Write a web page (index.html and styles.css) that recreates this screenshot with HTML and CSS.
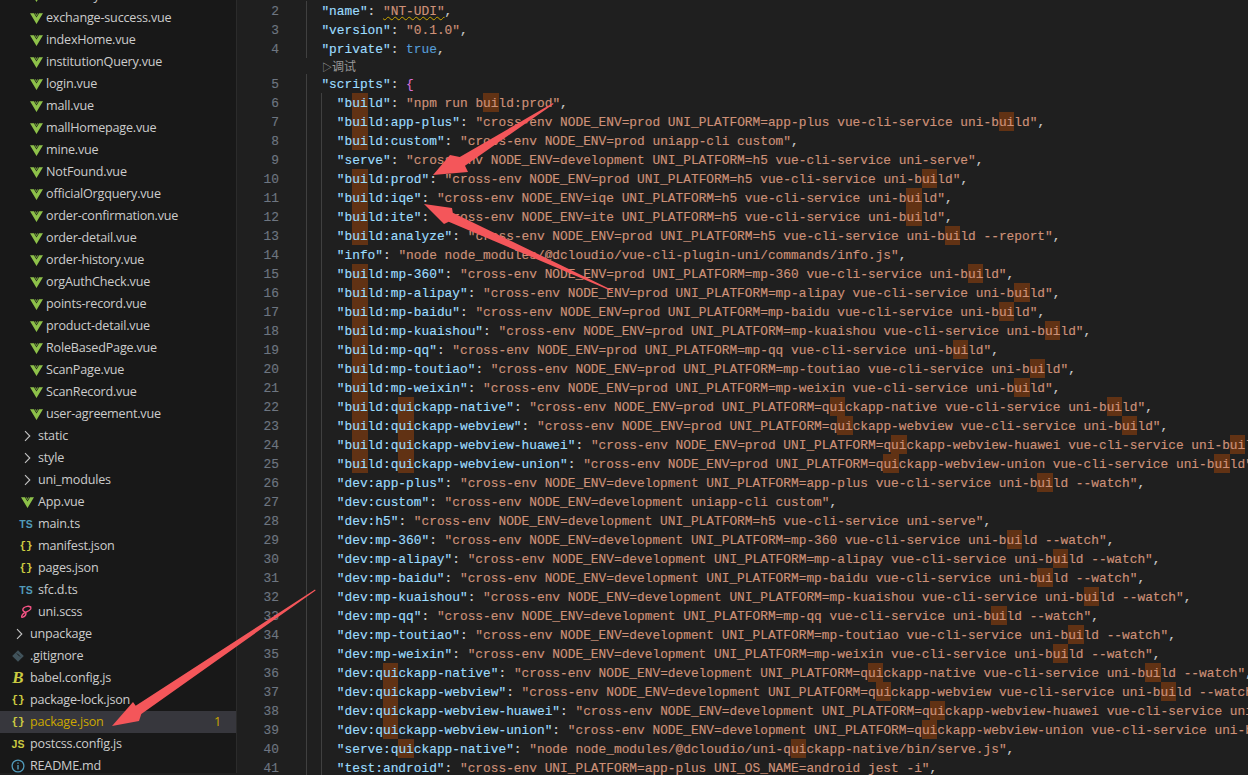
FILE: index.html
```html
<!DOCTYPE html>
<html lang="en">
<head>
<meta charset="utf-8">
<title>package.json</title>
<link rel="stylesheet" href="styles.css">
</head>
<body>
<svg width="0" height="0" class="defs">
<symbol id="vue" viewBox="0 0 13 11"><path d="M0 .2h3.9l2.6 4.3L9.1.2H13L6.5 11z" fill="#8dc149"/><path d="M4.6.2h1.1l.8 1.5.8-1.5h1.1L6.5 3.5z" fill="#8dc149" opacity=".75"/></symbol>
<symbol id="chev" viewBox="0 0 16 16"><path d="M7 3.2 11.8 8 7 12.8" fill="none" stroke="#c5c5c5" stroke-width="1.1"/></symbol>
</svg>
<div class="window">
<nav class="sidebar">
<ul class="tree">
<li class="row d3"><svg class="ico vue"><use href="#vue"/></svg><span class="name">discovery.vue</span></li>
<li class="row d3"><svg class="ico vue"><use href="#vue"/></svg><span class="name">exchange-success.vue</span></li>
<li class="row d3"><svg class="ico vue"><use href="#vue"/></svg><span class="name">indexHome.vue</span></li>
<li class="row d3"><svg class="ico vue"><use href="#vue"/></svg><span class="name">institutionQuery.vue</span></li>
<li class="row d3"><svg class="ico vue"><use href="#vue"/></svg><span class="name">login.vue</span></li>
<li class="row d3"><svg class="ico vue"><use href="#vue"/></svg><span class="name">mall.vue</span></li>
<li class="row d3"><svg class="ico vue"><use href="#vue"/></svg><span class="name">mallHomepage.vue</span></li>
<li class="row d3"><svg class="ico vue"><use href="#vue"/></svg><span class="name">mine.vue</span></li>
<li class="row d3"><svg class="ico vue"><use href="#vue"/></svg><span class="name">NotFound.vue</span></li>
<li class="row d3"><svg class="ico vue"><use href="#vue"/></svg><span class="name">officialOrgquery.vue</span></li>
<li class="row d3"><svg class="ico vue"><use href="#vue"/></svg><span class="name">order-confirmation.vue</span></li>
<li class="row d3"><svg class="ico vue"><use href="#vue"/></svg><span class="name">order-detail.vue</span></li>
<li class="row d3"><svg class="ico vue"><use href="#vue"/></svg><span class="name">order-history.vue</span></li>
<li class="row d3"><svg class="ico vue"><use href="#vue"/></svg><span class="name">orgAuthCheck.vue</span></li>
<li class="row d3"><svg class="ico vue"><use href="#vue"/></svg><span class="name">points-record.vue</span></li>
<li class="row d3"><svg class="ico vue"><use href="#vue"/></svg><span class="name">product-detail.vue</span></li>
<li class="row d3"><svg class="ico vue"><use href="#vue"/></svg><span class="name">RoleBasedPage.vue</span></li>
<li class="row d3"><svg class="ico vue"><use href="#vue"/></svg><span class="name">ScanPage.vue</span></li>
<li class="row d3"><svg class="ico vue"><use href="#vue"/></svg><span class="name">ScanRecord.vue</span></li>
<li class="row d3"><svg class="ico vue"><use href="#vue"/></svg><span class="name">user-agreement.vue</span></li>
<li class="row d2"><svg class="ico chev"><use href="#chev"/></svg><span class="name">static</span></li>
<li class="row d2"><svg class="ico chev"><use href="#chev"/></svg><span class="name">style</span></li>
<li class="row d2"><svg class="ico chev"><use href="#chev"/></svg><span class="name">uni_modules</span></li>
<li class="row d2"><svg class="ico vue"><use href="#vue"/></svg><span class="name">App.vue</span></li>
<li class="row d2"><span class="ico ts">TS</span><span class="name">main.ts</span></li>
<li class="row d2"><span class="ico js">{}</span><span class="name">manifest.json</span></li>
<li class="row d2"><span class="ico js">{}</span><span class="name">pages.json</span></li>
<li class="row d2"><span class="ico ts">TS</span><span class="name">sfc.d.ts</span></li>
<li class="row d2"><svg class="ico scss" viewBox="0 0 16 16"><path d="M12.5 3.2C11 1.6 7.4 2.3 5.6 4.1 4.4 5.3 4.6 6.6 6 7.4c1.3.7 2.2 1 2 2.2-.2 1.4-2 3.2-3.2 3.6-1.2.4-1.4-.6-.8-1.8.6-1.3 2-2.5 3.7-3.2 2-.9 4.2-1.6 5-3.2.3-.7.2-1.4-.2-2.8z" fill="none" stroke="#f55385" stroke-width="1.4"/></svg><span class="name">uni.scss</span></li>
<li class="row d1"><svg class="ico chev"><use href="#chev"/></svg><span class="name">unpackage</span></li>
<li class="row d1"><svg class="ico git" viewBox="0 0 16 16"><path d="M8 2.2 13.8 8 8 13.8 2.2 8z" fill="#41535b"/><path d="M7 5.5 10 8.5" stroke="#181818" stroke-width="1"/></svg><span class="name">.gitignore</span></li>
<li class="row d1"><span class="ico babel">B</span><span class="name">babel.config.js</span></li>
<li class="row d1"><span class="ico js">{}</span><span class="name">package-lock.json</span></li>
<li class="row d1 selected"><span class="ico js">{}</span><span class="name warn">package.json</span><span class="badge">1</span></li>
<li class="row d1"><span class="ico js jsfile">JS</span><span class="name">postcss.config.js</span></li>
<li class="row d1"><svg class="ico info" viewBox="0 0 16 16"><circle cx="8" cy="8" r="5.9" fill="none" stroke="#519aba" stroke-width="1.3"/><path d="M8 7v4.4M8 4.4v1.3" stroke="#519aba" stroke-width="1.4"/></svg><span class="name">README.md</span></li>
</ul>
</nav>
<main class="editor">
<div class="line"><span class="num">2</span><span class="g"></span><span class="code"><span class="k">"name"</span>: <span class="s squiggle">"NT-UDI"</span>,</span></div>
<div class="line"><span class="num">3</span><span class="g"></span><span class="code"><span class="k">"version"</span>: <span class="s">"0.1.0"</span>,</span></div>
<div class="line"><span class="num">4</span><span class="g"></span><span class="code"><span class="k">"private"</span>: <span class="b">true</span>,</span></div>
<div class="lens"><span class="lens-text"><span class="lens-run">▷</span>调试</span></div>
<div class="line"><span class="num">5</span><span class="g"></span><span class="code"><span class="k">"scripts"</span>: <span class="brace">{</span></span></div>
<div class="line"><span class="num">6</span><span class="g"></span><span class="g"></span><span class="code"><span class="k">"b<i class="m">ui</i>ld"</span>: <span class="s">"npm run b<i class="m">ui</i>ld:prod"</span>,</span></div>
<div class="line"><span class="num">7</span><span class="g"></span><span class="g"></span><span class="code"><span class="k">"b<i class="m">ui</i>ld:app-plus"</span>: <span class="s">"cross-env NODE_ENV=prod UNI_PLATFORM=app-plus vue-cli-service uni-b<i class="m">ui</i>ld"</span>,</span></div>
<div class="line"><span class="num">8</span><span class="g"></span><span class="g"></span><span class="code"><span class="k">"b<i class="m">ui</i>ld:custom"</span>: <span class="s">"cross-env NODE_ENV=prod uniapp-cli custom"</span>,</span></div>
<div class="line"><span class="num">9</span><span class="g"></span><span class="g"></span><span class="code"><span class="k">"serve"</span>: <span class="s">"cross-env NODE_ENV=development UNI_PLATFORM=h5 vue-cli-service uni-serve"</span>,</span></div>
<div class="line"><span class="num">10</span><span class="g"></span><span class="g"></span><span class="code"><span class="k">"b<i class="m">ui</i>ld:prod"</span>: <span class="s">"cross-env NODE_ENV=prod UNI_PLATFORM=h5 vue-cli-service uni-b<i class="m">ui</i>ld"</span>,</span></div>
<div class="line"><span class="num">11</span><span class="g"></span><span class="g"></span><span class="code"><span class="k">"b<i class="m">ui</i>ld:iqe"</span>: <span class="s">"cross-env NODE_ENV=iqe UNI_PLATFORM=h5 vue-cli-service uni-b<i class="m">ui</i>ld"</span>,</span></div>
<div class="line"><span class="num">12</span><span class="g"></span><span class="g"></span><span class="code"><span class="k">"b<i class="m">ui</i>ld:ite"</span>: <span class="s">"cross-env NODE_ENV=ite UNI_PLATFORM=h5 vue-cli-service uni-b<i class="m">ui</i>ld"</span>,</span></div>
<div class="line"><span class="num">13</span><span class="g"></span><span class="g"></span><span class="code"><span class="k">"b<i class="m">ui</i>ld:analyze"</span>: <span class="s">"cross-env NODE_ENV=prod UNI_PLATFORM=h5 vue-cli-service uni-b<i class="m">ui</i>ld --report"</span>,</span></div>
<div class="line"><span class="num">14</span><span class="g"></span><span class="g"></span><span class="code"><span class="k">"info"</span>: <span class="s">"node node_modules/@dcloudio/vue-cli-plugin-uni/commands/info.js"</span>,</span></div>
<div class="line"><span class="num">15</span><span class="g"></span><span class="g"></span><span class="code"><span class="k">"b<i class="m">ui</i>ld:mp-360"</span>: <span class="s">"cross-env NODE_ENV=prod UNI_PLATFORM=mp-360 vue-cli-service uni-b<i class="m">ui</i>ld"</span>,</span></div>
<div class="line"><span class="num">16</span><span class="g"></span><span class="g"></span><span class="code"><span class="k">"b<i class="m">ui</i>ld:mp-alipay"</span>: <span class="s">"cross-env NODE_ENV=prod UNI_PLATFORM=mp-alipay vue-cli-service uni-b<i class="m">ui</i>ld"</span>,</span></div>
<div class="line"><span class="num">17</span><span class="g"></span><span class="g"></span><span class="code"><span class="k">"b<i class="m">ui</i>ld:mp-baidu"</span>: <span class="s">"cross-env NODE_ENV=prod UNI_PLATFORM=mp-baidu vue-cli-service uni-b<i class="m">ui</i>ld"</span>,</span></div>
<div class="line"><span class="num">18</span><span class="g"></span><span class="g"></span><span class="code"><span class="k">"b<i class="m">ui</i>ld:mp-kuaishou"</span>: <span class="s">"cross-env NODE_ENV=prod UNI_PLATFORM=mp-kuaishou vue-cli-service uni-b<i class="m">ui</i>ld"</span>,</span></div>
<div class="line"><span class="num">19</span><span class="g"></span><span class="g"></span><span class="code"><span class="k">"b<i class="m">ui</i>ld:mp-qq"</span>: <span class="s">"cross-env NODE_ENV=prod UNI_PLATFORM=mp-qq vue-cli-service uni-b<i class="m">ui</i>ld"</span>,</span></div>
<div class="line"><span class="num">20</span><span class="g"></span><span class="g"></span><span class="code"><span class="k">"b<i class="m">ui</i>ld:mp-toutiao"</span>: <span class="s">"cross-env NODE_ENV=prod UNI_PLATFORM=mp-toutiao vue-cli-service uni-b<i class="m">ui</i>ld"</span>,</span></div>
<div class="line"><span class="num">21</span><span class="g"></span><span class="g"></span><span class="code"><span class="k">"b<i class="m">ui</i>ld:mp-weixin"</span>: <span class="s">"cross-env NODE_ENV=prod UNI_PLATFORM=mp-weixin vue-cli-service uni-b<i class="m">ui</i>ld"</span>,</span></div>
<div class="line"><span class="num">22</span><span class="g"></span><span class="g"></span><span class="code"><span class="k">"b<i class="m">ui</i>ld:q<i class="m">ui</i>ckapp-native"</span>: <span class="s">"cross-env NODE_ENV=prod UNI_PLATFORM=q<i class="m">ui</i>ckapp-native vue-cli-service uni-b<i class="m">ui</i>ld"</span>,</span></div>
<div class="line"><span class="num">23</span><span class="g"></span><span class="g"></span><span class="code"><span class="k">"b<i class="m">ui</i>ld:q<i class="m">ui</i>ckapp-webview"</span>: <span class="s">"cross-env NODE_ENV=prod UNI_PLATFORM=q<i class="m">ui</i>ckapp-webview vue-cli-service uni-b<i class="m">ui</i>ld"</span>,</span></div>
<div class="line"><span class="num">24</span><span class="g"></span><span class="g"></span><span class="code"><span class="k">"b<i class="m">ui</i>ld:q<i class="m">ui</i>ckapp-webview-huawei"</span>: <span class="s">"cross-env NODE_ENV=prod UNI_PLATFORM=q<i class="m">ui</i>ckapp-webview-huawei vue-cli-service uni-b<i class="m">ui</i>ld"</span>,</span></div>
<div class="line"><span class="num">25</span><span class="g"></span><span class="g"></span><span class="code"><span class="k">"b<i class="m">ui</i>ld:q<i class="m">ui</i>ckapp-webview-union"</span>: <span class="s">"cross-env NODE_ENV=prod UNI_PLATFORM=q<i class="m">ui</i>ckapp-webview-union vue-cli-service uni-b<i class="m">ui</i>ld"</span>,</span></div>
<div class="line"><span class="num">26</span><span class="g"></span><span class="g"></span><span class="code"><span class="k">"dev:app-plus"</span>: <span class="s">"cross-env NODE_ENV=development UNI_PLATFORM=app-plus vue-cli-service uni-b<i class="m">ui</i>ld --watch"</span>,</span></div>
<div class="line"><span class="num">27</span><span class="g"></span><span class="g"></span><span class="code"><span class="k">"dev:custom"</span>: <span class="s">"cross-env NODE_ENV=development uniapp-cli custom"</span>,</span></div>
<div class="line"><span class="num">28</span><span class="g"></span><span class="g"></span><span class="code"><span class="k">"dev:h5"</span>: <span class="s">"cross-env NODE_ENV=development UNI_PLATFORM=h5 vue-cli-service uni-serve"</span>,</span></div>
<div class="line"><span class="num">29</span><span class="g"></span><span class="g"></span><span class="code"><span class="k">"dev:mp-360"</span>: <span class="s">"cross-env NODE_ENV=development UNI_PLATFORM=mp-360 vue-cli-service uni-b<i class="m">ui</i>ld --watch"</span>,</span></div>
<div class="line"><span class="num">30</span><span class="g"></span><span class="g"></span><span class="code"><span class="k">"dev:mp-alipay"</span>: <span class="s">"cross-env NODE_ENV=development UNI_PLATFORM=mp-alipay vue-cli-service uni-b<i class="m">ui</i>ld --watch"</span>,</span></div>
<div class="line"><span class="num">31</span><span class="g"></span><span class="g"></span><span class="code"><span class="k">"dev:mp-baidu"</span>: <span class="s">"cross-env NODE_ENV=development UNI_PLATFORM=mp-baidu vue-cli-service uni-b<i class="m">ui</i>ld --watch"</span>,</span></div>
<div class="line"><span class="num">32</span><span class="g"></span><span class="g"></span><span class="code"><span class="k">"dev:mp-kuaishou"</span>: <span class="s">"cross-env NODE_ENV=development UNI_PLATFORM=mp-kuaishou vue-cli-service uni-b<i class="m">ui</i>ld --watch"</span>,</span></div>
<div class="line"><span class="num">33</span><span class="g"></span><span class="g"></span><span class="code"><span class="k">"dev:mp-qq"</span>: <span class="s">"cross-env NODE_ENV=development UNI_PLATFORM=mp-qq vue-cli-service uni-b<i class="m">ui</i>ld --watch"</span>,</span></div>
<div class="line"><span class="num">34</span><span class="g"></span><span class="g"></span><span class="code"><span class="k">"dev:mp-toutiao"</span>: <span class="s">"cross-env NODE_ENV=development UNI_PLATFORM=mp-toutiao vue-cli-service uni-b<i class="m">ui</i>ld --watch"</span>,</span></div>
<div class="line"><span class="num">35</span><span class="g"></span><span class="g"></span><span class="code"><span class="k">"dev:mp-weixin"</span>: <span class="s">"cross-env NODE_ENV=development UNI_PLATFORM=mp-weixin vue-cli-service uni-b<i class="m">ui</i>ld --watch"</span>,</span></div>
<div class="line"><span class="num">36</span><span class="g"></span><span class="g"></span><span class="code"><span class="k">"dev:q<i class="m">ui</i>ckapp-native"</span>: <span class="s">"cross-env NODE_ENV=development UNI_PLATFORM=q<i class="m">ui</i>ckapp-native vue-cli-service uni-b<i class="m">ui</i>ld --watch"</span>,</span></div>
<div class="line"><span class="num">37</span><span class="g"></span><span class="g"></span><span class="code"><span class="k">"dev:q<i class="m">ui</i>ckapp-webview"</span>: <span class="s">"cross-env NODE_ENV=development UNI_PLATFORM=q<i class="m">ui</i>ckapp-webview vue-cli-service uni-b<i class="m">ui</i>ld --watch"</span>,</span></div>
<div class="line"><span class="num">38</span><span class="g"></span><span class="g"></span><span class="code"><span class="k">"dev:q<i class="m">ui</i>ckapp-webview-huawei"</span>: <span class="s">"cross-env NODE_ENV=development UNI_PLATFORM=q<i class="m">ui</i>ckapp-webview-huawei vue-cli-service uni-b<i class="m">ui</i>ld --watch"</span>,</span></div>
<div class="line"><span class="num">39</span><span class="g"></span><span class="g"></span><span class="code"><span class="k">"dev:q<i class="m">ui</i>ckapp-webview-union"</span>: <span class="s">"cross-env NODE_ENV=development UNI_PLATFORM=q<i class="m">ui</i>ckapp-webview-union vue-cli-service uni-b<i class="m">ui</i>ld --watch"</span>,</span></div>
<div class="line"><span class="num">40</span><span class="g"></span><span class="g"></span><span class="code"><span class="k">"serve:q<i class="m">ui</i>ckapp-native"</span>: <span class="s">"node node_modules/@dcloudio/uni-q<i class="m">ui</i>ckapp-native/bin/serve.js"</span>,</span></div>
<div class="line"><span class="num">41</span><span class="g"></span><span class="g"></span><span class="code"><span class="k">"test:android"</span>: <span class="s">"cross-env UNI_PLATFORM=app-plus UNI_OS_NAME=android jest -i"</span>,</span></div>
</main>
</div>
<svg class="arrows" width="1248" height="775" viewBox="0 0 1248 775">
<polygon points="553,103 553.6,104 465,165.7 468,172 433,175 450,155 459.8,157.1" fill="#f4565a"/>
<polygon points="613,290.4 612.6,291.4 448.7,221.8 444,224 424,204 452,208 452.8,212.7" fill="#f4565a"/>
<polygon points="315,589.6 315.6,590.4 141.3,714 139,721 112,726 133,702 135.7,705.7" fill="#f4565a"/>
</svg>
</body>
</html>
```

FILE: styles.css
```css
* { box-sizing: border-box; }
html, body { margin: 0; height: 100%; overflow: hidden; background: #1f1f1f; }
.defs { position: absolute; }
.window { display: flex; height: 775px; overflow: hidden; }

.sidebar {
  width: 237px;
  flex: none;
  height: 773px;
  background: #181818;
  border-right: 1px solid #2b2b2b;
  overflow: hidden;
  font: 12.6px/22px "Open Sans", "Noto Sans", sans-serif;
  letter-spacing: -.2px;
  color: #cccccc;
}
.tree { list-style: none; margin: -15px 0 0; padding: 0; }
.row { display: flex; align-items: center; height: 22px; white-space: nowrap; }
.d3 { padding-left: 30px; }
.d2 { padding-left: 18px; }
.d1 { padding-left: 10px; }
.d1 .ico, .d2 .ico { margin-right: 4px; }
.selected { background: #37373d; }
.ico { flex: none; display: block; width: 16px; height: 16px; }
.ico.vue { width: 13px; height: 11px; margin-right: 3px; }
.d2 .ico.vue { margin-left: 3px; margin-right: 4px; }
.ico.ts, .ico.js, .ico.babel {
  font: bold 11px/16px "Liberation Mono", monospace;
  letter-spacing: 0;
  text-align: center;
}
.ico.ts { color: #519aba; font-family: "Liberation Sans", sans-serif; font-size: 10.5px; }
.ico.js { color: #cbcb41; }
.ico.jsfile { font-family: "Liberation Sans", sans-serif; font-size: 10.5px; }
.ico.babel { color: #cbcb41; font-family: "Liberation Serif", serif; font-style: italic; font-size: 17px; }
.name { display: block; }
.warn { color: #cca700; }
.badge { margin-left: auto; margin-right: 15px; color: #cca700; }

.editor {
  flex: 1;
  min-width: 0;
  padding-top: 1px;
  overflow: hidden;
  font: 12.83px/21px "Liberation Mono", monospace;
  -webkit-text-stroke: .15px;
  color: #cccccc;
  background: #1f1f1f;
}
.line { display: flex; height: 19px; white-space: pre; }
.num { flex: none; width: 42px; margin-right: 27px; text-align: right; color: #6e7681; }
.g { flex: none; width: 15.4px; height: 19px; box-shadow: inset 1px 0 #404040; }
.code { flex: none; }
.k { color: #9cdcfe; }
.s { color: #ce9178; }
.b { color: #569cd6; }
.brace { color: #da70d6; }
.m { font-style: normal; display: inline-block; height: 19px; background: #613214; }
.squiggle { text-decoration: underline wavy #cca700 1px; text-underline-offset: 1px; }
.lens { height: 16px; padding-left: 85px; }
.lens-text { display: block; font: 12px/16px "Noto Sans CJK SC", sans-serif; -webkit-text-stroke: 0; color: #999999; }
.lens-run { font-size: 10px; color: #aaaaaa; }

.arrows { position: absolute; left: 0; top: 0; pointer-events: none; }
```
